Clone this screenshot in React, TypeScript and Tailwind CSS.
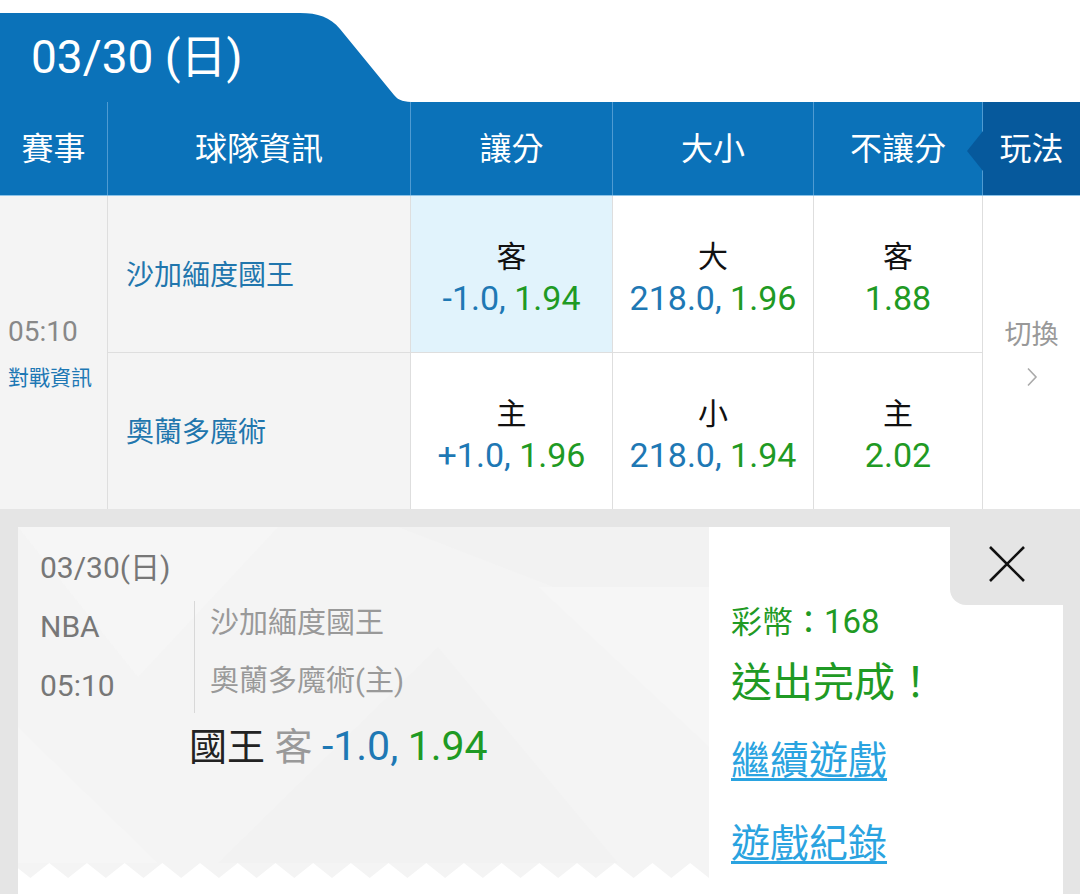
const rows = [
  {
    team: "沙加緬度國王",
    spread: { label: "客", line: "-1.0", odds: "1.94" },
    total: { label: "大", line: "218.0", odds: "1.96" },
    ml: { label: "客", odds: "1.88" },
    picked: true,
  },
  {
    team: "奧蘭多魔術",
    spread: { label: "主", line: "+1.0", odds: "1.96" },
    total: { label: "小", line: "218.0", odds: "1.94" },
    ml: { label: "主", odds: "2.02" },
    picked: false,
  },
];

function OddsCell({ label, line, odds, active, last }: { label: string; line?: string; odds: string; active?: boolean; last?: boolean }) {
  return (
    <div
      className={`flex flex-col items-center justify-center pt-[8px] border-r border-[#dedede] ${last ? "" : "border-b"} ${
        active ? "bg-[#e1f3fc]" : "bg-white"
      }`}
    >
      <span className="text-[30px] leading-[36px] text-[#111]">{label}</span>
      <span className="mt-[3px] text-[34px] leading-[40px]">
        {line && <span className="text-[#1e78b4]">{line}, </span>}
        <span className="text-[#1f9a24]">{odds}</span>
      </span>
    </div>
  );
}

export default function App() {
  return (
    <div className="h-[894px] w-[1080px] overflow-hidden bg-white font-[Roboto,'Noto_Sans_CJK_TC',sans-serif]">
      {/* 日期頁籤 */}
      <div className="pt-[13px] flex h-[102px]">
        <div className="w-[300px] h-[89px] bg-[#0b72b9] flex items-center pl-[31px] text-white text-[46px] leading-none pb-[2px]">
          03/30 (日)
        </div>
        <svg width="115" height="89" viewBox="0 0 115 89" className="block">
          <path d="M0 0 C18 0 30 4 40 16 L94 82 C99 88 104 89 115 89 L0 89 Z" fill="#0b72b9" />
        </svg>
      </div>

      {/* 表頭 */}
      <div className="grid grid-cols-[108px_303px_202px_201px_169px_97px] h-[94px] bg-[#0b72b9] text-white text-[32px] border-b border-[#8cc3e8]">
        <div className="flex items-center justify-center border-r border-[#4f9bd2]">賽事</div>
        <div className="flex items-center justify-center border-r border-[#4f9bd2]">球隊資訊</div>
        <div className="flex items-center justify-center border-r border-[#4f9bd2]">讓分</div>
        <div className="flex items-center justify-center border-r border-[#4f9bd2]">大小</div>
        <div className="flex items-center justify-center border-r border-[#4f9bd2]">不讓分</div>
        <div className="relative flex items-center justify-center bg-[#06599c]">
          <svg width="16" height="40" viewBox="0 0 16 40" className="absolute left-[-16px] top-[29px]">
            <path d="M16 0 L0 20 L16 40 Z" fill="#06599c" />
          </svg>
          玩法
        </div>
      </div>

      {/* 賽事列 */}
      <div className="grid grid-cols-[108px_303px_202px_201px_169px_97px] grid-rows-[157px_156px]">
        <div className="row-span-2 bg-[#f4f4f4] border-r border-[#dedede] flex flex-col justify-center pl-[8px]">
          <span className="text-[28px] leading-[34px] text-[#888]">05:10</span>
          <span className="mt-[16px] text-[21px] leading-[26px] text-[#1e78b4]">對戰資訊</span>
        </div>

        {rows.map((r, i) => (
          <div key={r.team} className="contents">
            <div
              className={`bg-[#f4f4f4] border-r border-[#dedede] ${i === 0 ? "border-b" : ""} flex items-center pl-[18px] pt-[4px] text-[28px] text-[#2176ad]`}
            >
              {r.team}
            </div>
            <OddsCell label={r.spread.label} line={r.spread.line} odds={r.spread.odds} active={r.picked} last={i === 1} />
            <OddsCell label={r.total.label} line={r.total.line} odds={r.total.odds} last={i === 1} />
            <OddsCell label={r.ml.label} odds={r.ml.odds} last={i === 1} />
            {i === 0 && (
              <div className="row-span-2 col-start-6 row-start-1 flex flex-col items-center justify-center text-[#999]">
                <span className="text-[27px] leading-[32px]">切換</span>
                <svg width="12" height="20" viewBox="0 0 12 20" className="mt-[16px]">
                  <path d="M2 1.5 L10 10 L2 18.5" fill="none" stroke="#aaa" strokeWidth="1.6" />
                </svg>
              </div>
            )}
          </div>
        ))}
      </div>

      {/* 下注完成 */}
      <div className="bg-[#e5e5e5] pt-[18px] pl-[18px] pr-[17px] h-[385px]">
        <div className="flex h-full bg-white">
          <div className="relative w-[691px] flex flex-col">
            <div className="relative flex-1 bg-[#f4f4f4] overflow-hidden">
              <svg className="absolute inset-0" width="691" height="336" viewBox="0 0 691 336">
                <polygon points="0,0 260,0 120,150" fill="#f6f6f6" />
                <polygon points="380,0 691,0 691,120" fill="#f2f2f2" />
                <polygon points="200,336 420,120 600,336" fill="#f2f2f2" />
                <polygon points="0,200 140,336 0,336" fill="#f6f6f6" />
                <polygon points="520,60 691,220 691,60" fill="#f6f6f6" />
              </svg>
              <div className="relative pt-[24px] pl-[22px] text-[30px] text-[#777]">
                <div className="leading-[34px]">03/30(日)</div>
                <div className="mt-[16px] flex">
                  <div className="w-[154px] pt-[9px]">
                    <div className="leading-[34px]">NBA</div>
                    <div className="mt-[25px] leading-[34px]">05:10</div>
                  </div>
                  <div className="border-l border-[#d8d8d8] pl-[15px] pt-[5px] pb-[15px] text-[29px] text-[#999]">
                    <div className="leading-[34px]">沙加緬度國王</div>
                    <div className="mt-[24px] leading-[34px]">奧蘭多魔術(主)</div>
                  </div>
                </div>
                <div className="mt-[11px] pl-[149px] text-[38px] leading-[44px]">
                  <span className="text-[#222]">國王</span> <span className="text-[#999]">客</span>{" "}
                  <span className="text-[41px] text-[#1e78b4]">-1.0,</span>{" "}
                  <span className="text-[41px] text-[#1f9a24]">1.94</span>
                </div>
              </div>
            </div>
            <svg width="691" height="15" viewBox="0 0 691 15" className="block bg-white">
              <path
                d={
                  "M0 0 L691 0 L691 15 " +
                  Array.from({ length: 19 }, (_, k) => {
                    const x = 691 - k * 37.7;
                    return `L${x - 18.85} 0 L${x - 37.7} 15`;
                  }).join(" ") +
                  " Z"
                }
                fill="#f4f4f4"
              />
            </svg>
            <div className="h-[16px] bg-white" />
          </div>

          <div className="flex-1 bg-white flex flex-col">
            <div className="flex justify-end">
              <div className="w-[113px] h-[78px] bg-[#e5e5e5] rounded-bl-[16px] flex items-center justify-center pb-[4px]">
                <svg width="38" height="38" viewBox="0 0 38 38">
                  <path d="M2 2 L36 36 M36 2 L2 36" stroke="#111" strokeWidth="2.6" />
                </svg>
              </div>
            </div>
            <div className="pl-[22px] text-[#1f9a24]">
              <div className="text-[31px] leading-[34px]">
                彩幣：<span className="text-[33px]">168</span>
              </div>
              <div className="mt-[19px] text-[41px] leading-[48px]">送出完成！</div>
              <div className="mt-[31px] text-[39px] leading-[46px] text-[#2aa3e0] underline decoration-[3px] underline-offset-[4px]">
                繼續遊戲
              </div>
              <div className="mt-[37px] text-[39px] leading-[46px] text-[#2aa3e0] underline decoration-[3px] underline-offset-[4px]">
                遊戲紀錄
              </div>
            </div>
          </div>
        </div>
      </div>
    </div>
  );
}
